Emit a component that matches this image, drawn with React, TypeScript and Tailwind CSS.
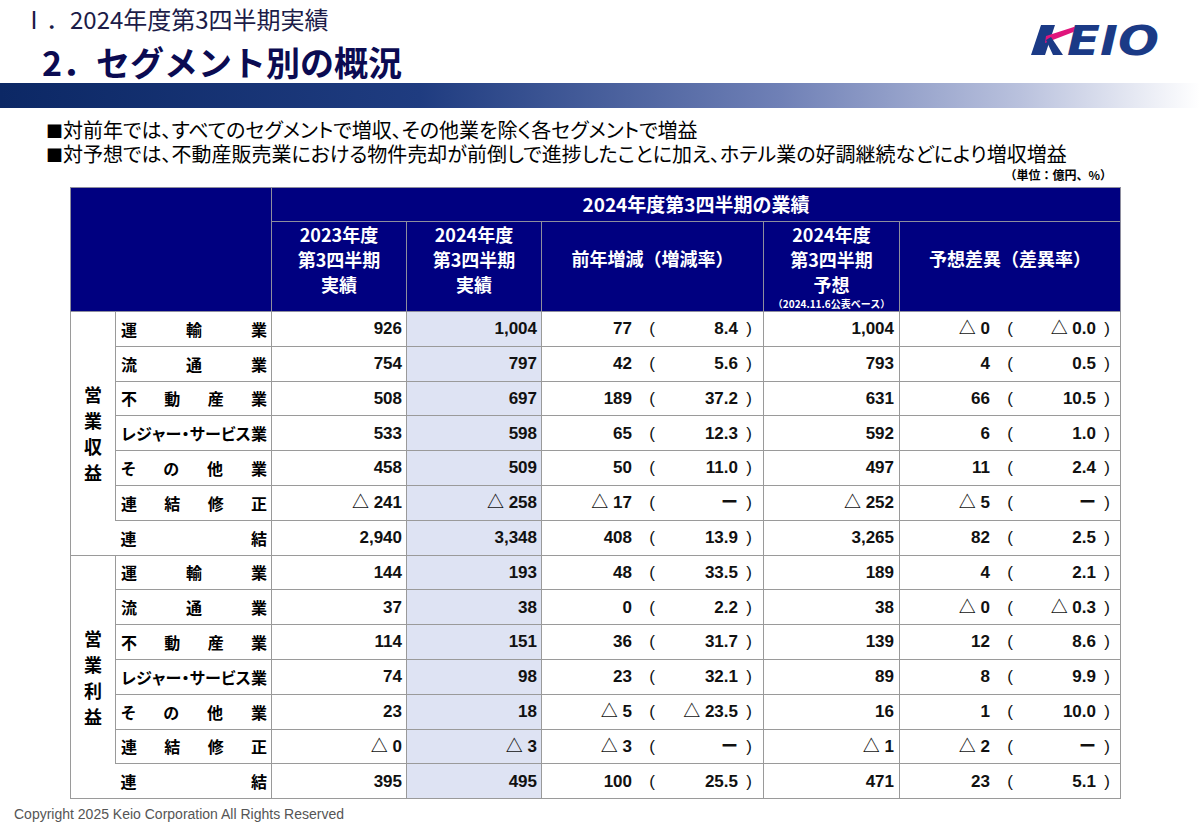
import React from "react";

type Row = {
  label: string[];
  prev: string;
  cur: string;
  diff: string;
  diffRate: string;
  plan: string;
  gap: string;
  gapRate: string;
};

const JP = "font-['Noto_Sans_CJK_JP',sans-serif]";
const NUM = "font-['Liberation_Sans','Noto_Sans_CJK_JP',sans-serif]";

const revenue: Row[] = [
  { label: ["運", "輸", "業"], prev: "926", cur: "1,004", diff: "77", diffRate: "8.4", plan: "1,004", gap: "△ 0", gapRate: "△ 0.0" },
  { label: ["流", "通", "業"], prev: "754", cur: "797", diff: "42", diffRate: "5.6", plan: "793", gap: "4", gapRate: "0.5" },
  { label: ["不", "動", "産", "業"], prev: "508", cur: "697", diff: "189", diffRate: "37.2", plan: "631", gap: "66", gapRate: "10.5" },
  { label: ["レ", "ジ", "ャ", "ー", "・", "サ", "ー", "ビ", "ス", "業"], prev: "533", cur: "598", diff: "65", diffRate: "12.3", plan: "592", gap: "6", gapRate: "1.0" },
  { label: ["そ", "の", "他", "業"], prev: "458", cur: "509", diff: "50", diffRate: "11.0", plan: "497", gap: "11", gapRate: "2.4" },
  { label: ["連", "結", "修", "正"], prev: "△ 241", cur: "△ 258", diff: "△ 17", diffRate: "ー", plan: "△ 252", gap: "△ 5", gapRate: "ー" },
  { label: ["連", "結"], prev: "2,940", cur: "3,348", diff: "408", diffRate: "13.9", plan: "3,265", gap: "82", gapRate: "2.5" },
];

const profit: Row[] = [
  { label: ["運", "輸", "業"], prev: "144", cur: "193", diff: "48", diffRate: "33.5", plan: "189", gap: "4", gapRate: "2.1" },
  { label: ["流", "通", "業"], prev: "37", cur: "38", diff: "0", diffRate: "2.2", plan: "38", gap: "△ 0", gapRate: "△ 0.3" },
  { label: ["不", "動", "産", "業"], prev: "114", cur: "151", diff: "36", diffRate: "31.7", plan: "139", gap: "12", gapRate: "8.6" },
  { label: ["レ", "ジ", "ャ", "ー", "・", "サ", "ー", "ビ", "ス", "業"], prev: "74", cur: "98", diff: "23", diffRate: "32.1", plan: "89", gap: "8", gapRate: "9.9" },
  { label: ["そ", "の", "他", "業"], prev: "23", cur: "18", diff: "△ 5", diffRate: "△ 23.5", plan: "16", gap: "1", gapRate: "10.0" },
  { label: ["連", "結", "修", "正"], prev: "△ 0", cur: "△ 3", diff: "△ 3", diffRate: "ー", plan: "△ 1", gap: "△ 2", gapRate: "ー" },
  { label: ["連", "結"], prev: "395", cur: "495", diff: "100", diffRate: "25.5", plan: "471", gap: "23", gapRate: "5.1" },
];

function KeioLogo() {
  return (
    <svg width="140" height="34" viewBox="0 0 140 34" className="mt-[23px] mr-[30px] overflow-visible">
      {/* K mark */}
      <polygon points="1,32 15,32 25,2 11,2" fill="#1b3a86" />
      <polygon points="16,13 50,2 46,8 15,20" fill="#e0157d" />
      <polygon points="16,17 21,14 33,32 23,32" fill="#1b3a86" />
      <text
        x="37"
        y="32"
        textLength="92"
        lengthAdjust="spacingAndGlyphs"
        fill="#1b3a86"
        fontFamily="DejaVu Sans, Liberation Sans, sans-serif"
        fontWeight="bold"
        fontStyle="italic"
        fontSize="41"
      >
        EIO
      </text>
    </svg>
  );
}

function Label({ chars }: { chars: string[] }) {
  return (
    <div className={`flex justify-between ${JP} text-[16px] font-bold leading-none text-black [font-feature-settings:'palt']`}>
      {chars.map((c, i) => (
        <span key={i}>{c}</span>
      ))}
    </div>
  );
}

function Paired({ value, rate }: { value: string; rate: string }) {
  return (
    <div className={`flex items-center ${NUM} text-[17px] font-bold text-[#111]`}>
      <span className="w-[90px] text-right">{value}</span>
      <span className="w-[40px] text-center font-normal">(</span>
      <span className="w-[66px] text-right">{rate}</span>
      <span className="w-[22px] text-center font-normal">)</span>
    </div>
  );
}

const cellB = "border border-[#9a9a9a]";
const numCell = `pr-[4px] text-right ${NUM} text-[17px] font-bold text-[#111]`;

function Section({ title, rows }: { title: string[]; rows: Row[] }) {
  return (
    <>
      {rows.map((r, i) => {
        const last = i === rows.length - 1;
        return (
          <tr key={i} className="h-[34.8px]">
            {i === 0 && (
              <td rowSpan={rows.length} className="border-t border-l border-b border-[#9a9a9a] align-middle">
                <div className={`flex flex-col items-center ${JP} text-[18px] font-bold leading-[26px] text-black`}>
                  {title.map((c) => (
                    <span key={c}>{c}</span>
                  ))}
                </div>
              </td>
            )}
            <td className={`${last ? "border-y border-r border-[#9a9a9a]" : cellB} pl-[5px] pr-[4px]`}>
              <Label chars={r.label} />
            </td>
            <td className={`${cellB} ${numCell}`}>{r.prev}</td>
            <td className={`${cellB} bg-[#dee3f3] ${numCell}`}>{r.cur}</td>
            <td className={cellB}>
              <Paired value={r.diff} rate={r.diffRate} />
            </td>
            <td className={`${cellB} ${numCell} pr-[5px]`}>{r.plan}</td>
            <td className={cellB}>
              <Paired value={r.gap} rate={r.gapRate} />
            </td>
          </tr>
        );
      })}
    </>
  );
}

export default function App() {
  const head = `${JP} text-[18px] font-bold text-white`;
  const headCell = "border border-[#8e8e9e] bg-[#000080] align-top text-center";
  return (
    <div className="relative h-[828px] w-[1200px] overflow-hidden bg-white">
      <div className="flex items-start justify-between">
        <div>
          <div className={`pl-[22px] pt-[4px] ${JP} text-[24px] leading-[30px] text-[#1c1c48]`}>Ⅰ．2024年度第3四半期実績</div>
          <div className={`mt-[8px] pl-[42px] ${JP} text-[34px] font-bold leading-[40px] text-[#0b0b52]`}>2．セグメント別の概況</div>
        </div>
        <KeioLogo />
      </div>

      <div className="mt-[1px] h-[25px] bg-[linear-gradient(to_right,#0c2865_0%,#1f3c80_35%,#6f80b6_65%,#b9c1dd_85%,#ffffff_100%)]" />

      <div className={`mt-[10px] flex flex-col pl-[46px] ${JP} text-[20px] leading-[24px] text-black [font-feature-settings:'palt']`}>
        <p className="h-[24px]">
          <span className="text-[17px] leading-none">■</span>対前年では、すべてのセグメントで増収、その他業を除く各セグメントで増益
        </p>
        <p className="h-[24px]">
          <span className="text-[17px] leading-none">■</span>対予想では、不動産販売業における物件売却が前倒しで進捗したことに加え、ホテル業の好調継続などにより増収増益
        </p>
      </div>
      <div className={`mt-[1px] pr-[88px] text-right ${JP} text-[12px] font-bold leading-[16px] text-black`}>（単位：億円、%）</div>

      <table className="mt-[4px] ml-[70px] w-[1050px] table-fixed border-collapse">
        <colgroup>
          <col className="w-[45px]" />
          <col className="w-[156px]" />
          <col className="w-[135px]" />
          <col className="w-[135px]" />
          <col className="w-[222px]" />
          <col className="w-[136px]" />
          <col className="w-[221px]" />
        </colgroup>
        <thead>
          <tr className="h-[34px]">
            <td colSpan={2} rowSpan={2} className="border border-[#8e8e9e] bg-[#000080]" />
            <td colSpan={5} className={`border border-[#8e8e9e] bg-[#000080] text-center ${head} text-[19px]`}>
              2024年度第3四半期の業績
            </td>
          </tr>
          <tr className="h-[90px]">
            <td className={`${headCell} ${head} leading-[25px]`}>
              <div>2023年度</div>
              <div>第3四半期</div>
              <div>実績</div>
            </td>
            <td className={`${headCell} ${head} leading-[25px]`}>
              <div>2024年度</div>
              <div>第3四半期</div>
              <div>実績</div>
            </td>
            <td className={`${headCell} pt-[24px] ${head} leading-[25px]`}>前年増減（増減率）</td>
            <td className={`${headCell} ${head} leading-[25px]`}>
              <div>2024年度</div>
              <div>第3四半期</div>
              <div>予想</div>
              <div className="text-[10px] leading-[14px]">（2024.11.6公表ベース）</div>
            </td>
            <td className={`${headCell} pt-[24px] ${head} leading-[25px]`}>予想差異（差異率）</td>
          </tr>
        </thead>
        <tbody>
          <Section title={["営", "業", "収", "益"]} rows={revenue} />
          <Section title={["営", "業", "利", "益"]} rows={profit} />
        </tbody>
      </table>

      <div className="mt-[6px] pl-[14px] font-['Liberation_Sans',sans-serif] text-[14px] leading-[18px] text-[#555]">
        Copyright 2025 Keio Corporation All Rights Reserved
      </div>
    </div>
  );
}
